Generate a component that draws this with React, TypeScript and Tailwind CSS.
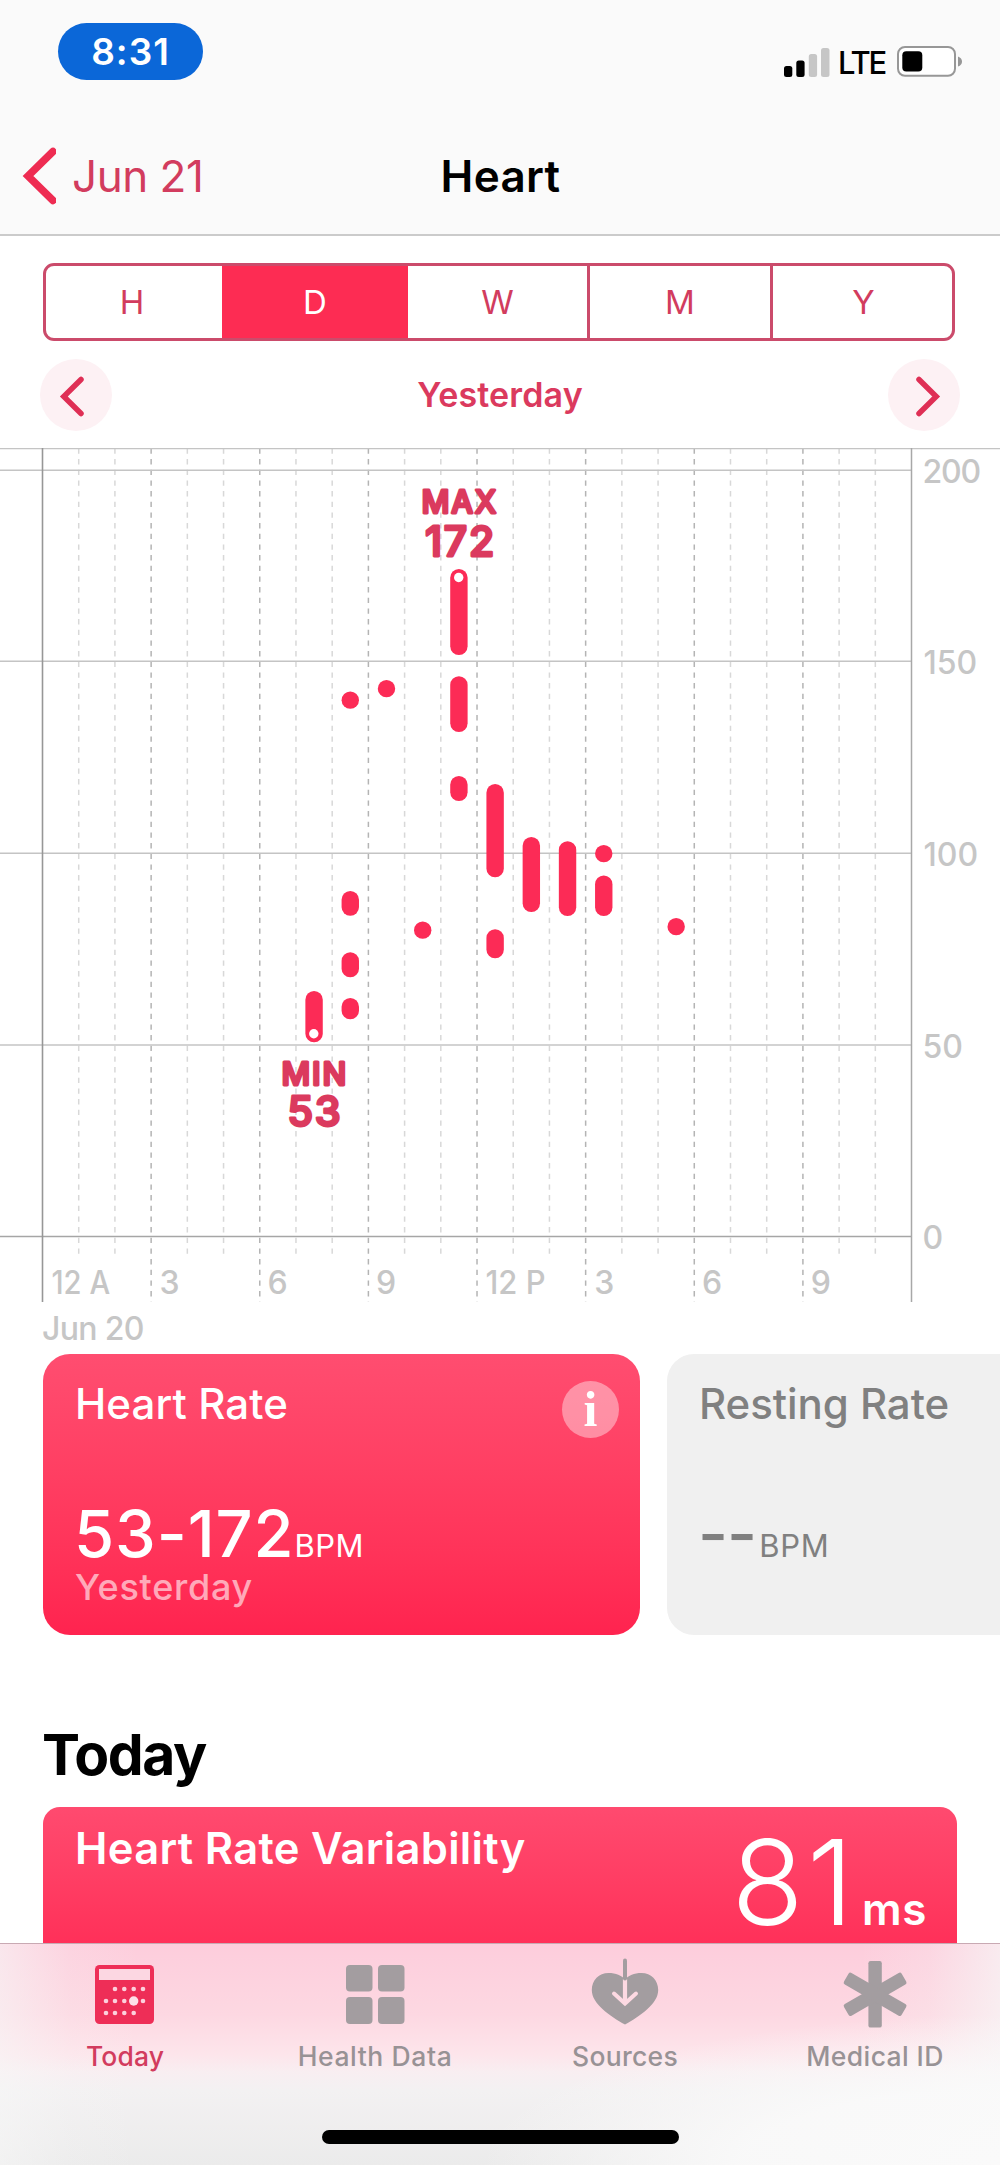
import type { ReactNode } from "react";

const PINK = "#fc2b56";
const PINK_TEXT = "#db3a5e";
const LABEL = "#c6c6c6";

const HOUR = 36.21;
const AXIS_X = 42.5;
const hourX = (h: number) => AXIS_X + h * HOUR;

/* hour, top, bottom of each recorded range */
const ranges: [number, number, number][] = [
  [7.5, 991, 1042.3],
  [8.5, 691.5, 708.8],
  [8.5, 891, 915.7],
  [8.5, 952.3, 977.3],
  [8.5, 998, 1019.3],
  [9.5, 680, 697.3],
  [10.5, 921.5, 938.8],
  [11.5, 569, 655],
  [11.5, 676.3, 732],
  [11.5, 776, 801],
  [12.5, 784, 877.3],
  [12.5, 929.3, 958.3],
  [13.5, 837, 912],
  [14.5, 841.3, 916],
  [15.5, 845, 862.3],
  [15.5, 875.5, 916],
  [17.5, 918, 935.3],
];

const gridLines: [number, string][] = [
  [470.3, "200"],
  [661.2, "150"],
  [853.2, "100"],
  [1045.1, "50"],
  [1236.4, "0"],
];

const hourLabels: [number, string, number, number][] = [
  [0, "12 A", 51.5, 58.6],
  [3, "3", 159.5, 0],
  [6, "6", 267.5, 0],
  [9, "9", 376, 0],
  [12, "12 P", 485.5, 60],
  [15, "3", 594.3, 0],
  [18, "6", 702, 0],
  [21, "9", 810.7, 0],
];

function Chevron({ flip, big }: { flip?: boolean; big?: boolean }) {
  if (big) {
    return (
      <svg width="36" height="60" viewBox="0 0 36 60" fill="none">
        <path d="M33 5.5 L8 30 L33 54.5" stroke="#ee2c52" strokeWidth="7.5" strokeLinecap="round" strokeLinejoin="miter" />
      </svg>
    );
  }
  return (
    <svg width="72" height="72" viewBox="0 0 72 72" fill="none" className={flip ? "-scale-x-100" : ""}>
      <path d="M41 20.5 L23.8 37.5 L41 54.5" stroke="#df2f55" strokeWidth="5.5" strokeLinecap="round" />
    </svg>
  );
}

function Header() {
  return (
    <header className="h-[236px] shrink-0 border-b-2 border-[#cbcbcb] bg-[#fafafa]">
      <div className="flex h-[117px] items-start justify-between pl-[58px] pr-[38px]">
        <div className="mt-[23px] flex h-[57px] w-[145px] items-center justify-center rounded-full bg-[#0b67d8] text-[37px] font-semibold tracking-[1px] text-white">
          8:31
        </div>
        <div className="mt-[46px] flex h-[31px] items-center">
          <svg width="46" height="30" viewBox="0 0 46 30">
            <rect x="0" y="19" width="8.3" height="11" rx="2.5" fill="#000" />
            <rect x="12.3" y="13.5" width="8.3" height="16.5" rx="2.5" fill="#000" />
            <rect x="24.8" y="7" width="8.3" height="23" rx="2.5" fill="#c6c6c6" />
            <rect x="37" y="1" width="8.5" height="29" rx="2.5" fill="#c6c6c6" />
          </svg>
          <span className="ml-[8px] mt-[2px] w-[59px] text-[31px] font-medium leading-[31px] tracking-[-2.2px] text-black">LTE</span>
          <svg width="65" height="31" viewBox="0 0 65 31">
            <rect x="1" y="1" width="57" height="28.8" rx="7" fill="#fff" stroke="#979797" strokeWidth="2" />
            <rect x="5.3" y="5.2" width="20" height="20.3" rx="4" fill="#000" />
            <path d="M61 10.5 Q65 12 65 15.5 Q65 19 61 20.5 Z" fill="#979797" />
          </svg>
        </div>
      </div>
      <div className="grid h-[118px] grid-cols-[1fr_auto_1fr] items-center">
        <div className="flex items-center pl-[20px]">
          <Chevron big />
          <span className="ml-[16px] text-[44px] leading-[60px] tracking-[-0.47px] text-[#d23c5e]">Jun 21</span>
        </div>
        <h1 className="ml-px text-[44px] font-semibold leading-[60px] tracking-[0.3px] text-black">Heart</h1>
        <div />
      </div>
    </header>
  );
}

function Segments() {
  return (
    <div className="ml-[43px] mt-[27px] grid h-[78px] w-[912px] shrink-0 grid-cols-[176px_186px_182px_183px_1fr] overflow-hidden rounded-[11px] border-3 border-[#cb4b6b] text-[33px] leading-[73px] text-[#d23c5e]">
      <div className="pr-[4px] text-center">H</div>
      <div className="bg-[#fd2c53] text-center text-white">D</div>
      <div className="border-r-3 border-[#cb4b6b] text-center">W</div>
      <div className="border-r-3 border-[#cb4b6b] text-center">M</div>
      <div className="pl-[2px] text-center">Y</div>
    </div>
  );
}

function DatePager() {
  return (
    <div className="mt-[18px] flex h-[72px] shrink-0 items-center justify-between px-[40px]">
      <div className="size-[72px] rounded-full bg-[#fdf1f4]">
        <Chevron />
      </div>
      <span className="mb-[2px] text-[34px] font-semibold tracking-[0.15px] text-[#db3a5e]">Yesterday</span>
      <div className="size-[72px] rounded-full bg-[#fdf1f4]">
        <Chevron flip />
      </div>
    </div>
  );
}

function HeartChart() {
  const hours = Array.from({ length: 23 }, (_, i) => i + 1);
  return (
    <svg
      className="mt-[17px] block shrink-0 font-['Inter',sans-serif]"
      width="1000"
      height="906"
      viewBox="0 448 1000 906"
    >
      {hours.map((h) => (
        <line
          key={h}
          x1={hourX(h)}
          x2={hourX(h)}
          y1={448.4}
          y2={h % 3 === 0 ? 1302 : 1254}
          stroke={h % 3 === 0 ? "#b4b4b4" : "#d8d8d8"}
          strokeWidth={1.5}
          strokeDasharray="5.33 5.337"
        />
      ))}
      <line x1={0} x2={1000} y1={448.6} y2={448.6} stroke="#c4c4c4" strokeWidth={1.4} />
      {gridLines.map(([y, label]) => (
        <g key={label}>
          <line x1={0} x2={911.5} y1={y} y2={y} stroke={label === "0" ? "#a6a6a6" : "#c4c4c4"} strokeWidth={1.5} />
          <text
            x={label[0] === "1" ? 923.5 : 922.5}
            y={y + 12.6}
            fontSize={32}
            fontWeight={450}
            letterSpacing={label === "200" ? -1.2 : 0}
            fill={LABEL}
          >
            {label}
          </text>
        </g>
      ))}
      <line x1={AXIS_X} x2={AXIS_X} y1={448} y2={1302} stroke="#979797" strokeWidth={1.6} />
      <line x1={911.5} x2={911.5} y1={448} y2={1302} stroke="#a8a8a8" strokeWidth={1.5} />
      {hourLabels.map(([h, label, x, w]) => (
        <text
          key={h}
          x={x}
          y={1294}
          fontSize={32}
          fontWeight={450}
          fill={LABEL}
          textLength={w || undefined}
          lengthAdjust="spacingAndGlyphs"
        >
          {label}
        </text>
      ))}
      <text x={42} y={1340} fontSize={32} fontWeight={450} fill={LABEL} letterSpacing={-0.7}>
        Jun 20
      </text>
      {ranges.map(([h, top, bottom], i) => (
        <rect key={i} x={hourX(h) - 8.7} y={top} width={17.4} height={bottom - top} rx={8.65} fill={PINK} />
      ))}
      <circle cx={458.7} cy={577.5} r={4.7} fill="#fff" />
      <circle cx={313.8} cy={1033.7} r={4.7} fill="#fff" />
      <g
        fill={PINK_TEXT}
        stroke={PINK_TEXT}
        strokeWidth={2.8}
        strokeLinejoin="round"
        strokeLinecap="round"
        letterSpacing={1.8}
        fontWeight={500}
      >
        <text x={421.5} y={513} fontSize={31} textLength={76.5} lengthAdjust="spacingAndGlyphs">
          MAX
        </text>
        <text x={425} y={556} fontSize={41.5} textLength={71} lengthAdjust="spacingAndGlyphs">
          172
        </text>
        <text x={281.5} y={1085} fontSize={31} textLength={66.5} lengthAdjust="spacingAndGlyphs">
          MIN
        </text>
        <text x={287.5} y={1126} fontSize={41.5} textLength={55} lengthAdjust="spacingAndGlyphs">
          53
        </text>
      </g>
    </svg>
  );
}

function SummaryCards() {
  return (
    <div className="flex shrink-0 gap-[27px] overflow-hidden pl-[43px]">
      <section className="h-[281px] w-[597px] shrink-0 rounded-[27px] bg-linear-to-b from-[#ff4d70] to-[#ff234f] pl-[32px] pt-[20px] text-white">
        <div className="flex h-[60px] justify-between pr-[21px]">
          <h2 className="text-[42px] font-medium leading-[60px] tracking-[0.1px]">Heart Rate</h2>
          <div className="mt-[7px] size-[57px] rounded-full bg-white/40 text-center font-['Liberation_Serif',serif] text-[50px] font-bold leading-[56px]">
            i
          </div>
        </div>
        <div className="-ml-px mt-[65px] flex h-[70px] items-baseline leading-[70px]">
          <span className="text-[65px] font-[450] tracking-[0.9px]">53-172</span>
          <span className="text-[31px] tracking-[0.4px]">BPM</span>
        </div>
        <div className="text-[36px] font-medium leading-[36px] tracking-[0.7px] text-white/60">Yesterday</div>
      </section>
      <section className="h-[281px] w-[333px] shrink-0 rounded-l-[27px] bg-[#f0f0f0] pl-[32px] pt-[20px] text-[#808080]">
        <h2 className="text-[42px] font-medium leading-[60px] tracking-[-0.05px]">Resting Rate</h2>
        <div className="-ml-px mt-[65px] flex h-[70px] items-baseline leading-[70px]">
          <span className="text-[65px] font-medium tracking-[-1px]">--</span>
          <span className="ml-[3px] text-[31px] tracking-[0.8px]">BPM</span>
        </div>
      </section>
    </div>
  );
}

function VariabilityCard() {
  return (
    <section className="mx-[43px] mt-[18px] flex min-h-0 flex-1 items-start justify-between overflow-hidden rounded-t-[17px] bg-linear-to-b from-[#ff4a6f] to-[#ff3059] pl-[32px] pr-[30px] text-white">
      <h2 className="mt-[17px] text-[43.5px] font-semibold leading-[48px] tracking-[0.3px]">Heart Rate Variability</h2>
      <div className="mt-[17px] flex items-baseline">
        <span className="text-[118px] font-light leading-[117px] tracking-[3.5px]">81</span>
        <span className="ml-[5px] text-[44px] font-semibold leading-[44px] tracking-[0.6px]">ms</span>
      </div>
    </section>
  );
}

function CalendarIcon() {
  const xs = [16, 25, 34.3, 43.7, 53];
  const dots: [number, number][] = [
    [1, 31], [2, 31], [3, 31], [4, 31],
    [0, 43], [1, 43], [2, 43], [4, 43],
    [0, 55], [1, 55], [2, 55], [3, 55],
  ];
  return (
    <>
      <rect x="5" y="7" width="59" height="59" rx="4.5" fill="#ee2e57" />
      <rect x="9" y="11" width="51" height="11" fill="#fcd7e2" />
      {dots.map(([c, y]) => (
        <circle key={`${c}-${y}`} cx={xs[c]} cy={y} r="2.3" fill="#fcd0dc" />
      ))}
      <circle cx="43.7" cy="43" r="4.7" fill="#fde0e8" />
    </>
  );
}

function GridIcon() {
  return (
    <g fill="#a39da0">
      <rect x="6" y="7" width="26.5" height="26.5" rx="4" />
      <rect x="38" y="7" width="26.5" height="26.5" rx="4" />
      <rect x="6" y="39" width="26.5" height="27" rx="4" />
      <rect x="38" y="39" width="26.5" height="27" rx="4" />
    </g>
  );
}

function SourcesIcon() {
  return (
    <>
      <path
        fill="#a39da0"
        d="M35 66.6 C20 58 1.8 46 1.8 32 C1.8 22 9 15 18.5 15 C26 15 31.5 17.5 35 21.5 C38.5 17.5 44 15 51.5 15 C61 15 68.2 22 68.2 32 C68.2 46 50 58 35 66.6 Z"
      />
      <path d="M35 21 V45" stroke="#fdd9e2" strokeWidth="4.2" />
      <path d="M24 35.5 L35 45.5 L46 35.5" stroke="#fdd9e2" strokeWidth="4" strokeLinecap="round" fill="none" />
      <path d="M35 2.5 V20.5" stroke="#a39da0" strokeWidth="4" strokeLinecap="round" />
    </>
  );
}

function MedicalIcon() {
  return (
    <g fill="#a39da0">
      {[0, 60, 120].map((a) => (
        <rect key={a} x="28.4" y="3" width="13.4" height="66.6" rx="2.2" transform={`rotate(${a} 35.1 36.3)`} />
      ))}
    </g>
  );
}

function Tab({ icon, label, className }: { icon: ReactNode; label: string; className: string }) {
  return (
    <div className="flex flex-col items-center">
      <svg width="70" height="70" viewBox="0 0 70 70">
        {icon}
      </svg>
      <span className={`mt-[12px] text-[26.5px] leading-[32px] ${className}`}>{label}</span>
    </div>
  );
}

function TabBar() {
  return (
    <nav className="flex h-[222px] shrink-0 flex-col items-center border-t border-[#c9a9b3] bg-[radial-gradient(ellipse_520px_150px_at_100%_100%,#fafafa_0%,rgba(250,250,250,0.9)_50%,rgba(250,250,250,0)_100%),linear-gradient(to_right,rgba(247,247,247,0.6)_0%,rgba(247,247,247,0.15)_7%,rgba(247,247,247,0)_14%,rgba(247,247,247,0)_86%,rgba(247,247,247,0.2)_93%,rgba(247,247,247,0.7)_100%),linear-gradient(to_bottom,#fdcddc_0%,#fdd8e2_32%,#fde5eb_50%,#f8eef1_58%,#f3f1f2_66%,#ebebeb_100%)]">
      <div className="mt-[14px] grid w-full grid-cols-4">
        <Tab icon={<CalendarIcon />} label="Today" className="font-[450] tracking-[0.1px] text-[#d23c5e]" />
        <Tab icon={<GridIcon />} label="Health Data" className="font-[450] tracking-[0.6px] text-[#989295]" />
        <Tab icon={<SourcesIcon />} label="Sources" className="font-[450] tracking-[0.3px] text-[#989295]" />
        <Tab icon={<MedicalIcon />} label="Medical ID" className="font-[450] tracking-[0.4px] text-[#989295]" />
      </div>
      <div className="mt-[58px] h-[14px] w-[357px] rounded-full bg-black" />
    </nav>
  );
}

export default function App() {
  return (
    <div className="flex h-[2165px] w-[1000px] flex-col overflow-hidden bg-white font-['Inter',sans-serif]">
      <Header />
      <Segments />
      <DatePager />
      <HeartChart />
      <SummaryCards />
      <h2 className="ml-[42px] mt-[85px] shrink-0 text-[57px] font-bold leading-[69px] tracking-[-1.4px] text-black">Today</h2>
      <VariabilityCard />
      <TabBar />
    </div>
  );
}
